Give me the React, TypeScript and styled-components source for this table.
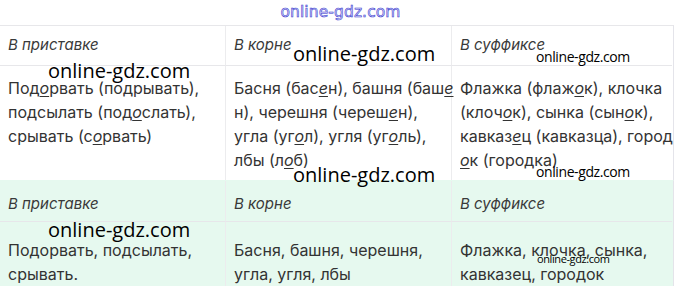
import React from 'react';
import styled, { createGlobalStyle, css } from 'styled-components';

type Part = string | { v: string };
type Line = Part[];
type Tone = 'plain' | 'green';

const GlobalStyle = createGlobalStyle`
  html, body {
    margin: 0;
    padding: 0;
    background: #ffffff;
  }
  body {
    font-family: Inter, 'Noto Sans', sans-serif;
    color: #333333;
  }
`;

const o = { v: 'о' };
const e = { v: 'е' };

const topRows: Line[][] = [
  [
    ['Под', o, 'рвать (подрывать),'],
    ['подсылать (под', o, 'слать),'],
    ['срывать (с', o, 'рвать)'],
  ],
  [
    ['Басня (бас', e, 'н), башня (баш', e],
    ['н), черешня (череш', e, 'н),'],
    ['угла (уг', o, 'л), угля (уг', o, 'ль),'],
    ['лбы (л', o, 'б)'],
  ],
  [
    ['Флажка (флаж', o, 'к), клочка'],
    ['(клоч', o, 'к), сынка (сын', o, 'к),'],
    ['кавказ', e, 'ц (кавказца), город'],
    [o, 'к (городка)'],
  ],
];

const bottomRows: Line[][] = [
  [['Подорвать, подсылать,'], ['срывать.']],
  [['Басня, башня, черешня,'], ['угла, угля, лбы']],
  [['Флажка, клочка, сынка,'], ['кавказец, городок']],
];

const headers = ['В приставке', 'В корне', 'В суффиксе'];

const marks = [
  { x: 48, y: 61, size: 20, spacing: 0 },
  { x: 293, y: 44, size: 20, spacing: 0 },
  { x: 536, y: 50, size: 14, spacing: -0.4 },
  { x: 293, y: 165, size: 20, spacing: 0 },
  { x: 536, y: 165, size: 14, spacing: -0.4 },
  { x: 48, y: 220, size: 20, spacing: 0 },
  { x: 537, y: 253, size: 11, spacing: -0.4 },
];

const renderLine = (line: Line, key: number) => (
  <TextLine key={key}>
    {line.map((part, i) =>
      typeof part === 'string' ? <React.Fragment key={i}>{part}</React.Fragment> : <Vowel key={i}>{part.v}</Vowel>,
    )}
  </TextLine>
);

const Section = ({ $tone, cells }: { $tone: Tone; cells: Line[][] }) => (
  <Table $tone={$tone}>
    {headers.map((h) => (
      <HeadCell key={h} $tone={$tone}>
        {h}
      </HeadCell>
    ))}
    {cells.map((lines, i) => (
      <BodyCell key={i} $tone={$tone}>
        {lines.map(renderLine)}
      </BodyCell>
    ))}
  </Table>
);

const App = () => (
  <Page>
    <GlobalStyle />
    <Banner>
      <BannerMark>online-gdz.com</BannerMark>
    </Banner>
    <Section $tone="plain" cells={topRows} />
    <Section $tone="green" cells={bottomRows} />
    {marks.map((m, i) => (
      <Watermark key={i} $size={m.size} $spacing={m.spacing} style={{ left: m.x, top: m.y }}>
        online-gdz.com
      </Watermark>
    ))}
  </Page>
);

const Page = styled.div`
  position: relative;
  width: 680px;
  height: 286px;
  overflow: hidden;
  background: #ffffff;
`;

const Banner = styled.div`
  display: flex;
  justify-content: center;
  align-items: center;
  height: 25px;
  padding-left: 1px;
`;

const BannerMark = styled.span`
  font-family: 'DejaVu Sans', sans-serif;
  font-size: 15.5px;
  line-height: 1;
  color: #d4d4f6;
  -webkit-text-stroke: 0.55px #3636cf;
  letter-spacing: 0.1px;
`;

const Table = styled.div<{ $tone: Tone }>`
  ${({ $tone }) => css`
    display: grid;
    grid-template-columns: 226px 226px 220px;
    width: 673px;
    background: ${$tone === 'green' ? '#e6f9ef' : '#ffffff'};
    border-top: 1px solid ${$tone === 'green' ? '#e6f9ef' : '#e7e7ea'};
    border-right: 1px solid #e4e4ea;
  `}
`;

const cellBase = css`
  padding-left: 8px;
  padding-right: 2px;
  border-right: 1px solid #ececee;
  line-height: 24px;
  white-space: nowrap;
  box-sizing: border-box;
  &:nth-child(3n) {
    border-right: none;
  }
`;

const HeadCell = styled.div<{ $tone: Tone }>`
  ${cellBase}
  height: ${({ $tone }) => ($tone === 'green' ? '41px' : '40px')};
  padding-top: ${({ $tone }) => ($tone === 'green' ? '11px' : '7px')};
  border-bottom: 1px solid #e7e7ea;
  font-size: 15px;
  font-style: italic;
  color: #3a3a3a;
`;

const BodyCell = styled.div<{ $tone: Tone }>`
  ${cellBase}
  height: ${({ $tone }) => ($tone === 'green' ? '70px' : '114px')};
  padding-top: ${({ $tone }) => ($tone === 'green' ? '16px' : '10px')};
  font-size: 16px;
  color: #333333;
`;

const TextLine = styled.div`
  height: 24px;
`;

const Vowel = styled.span`
  font-style: italic;
  text-decoration: underline;
  text-decoration-thickness: 1px;
  text-underline-offset: 2px;
`;

const Watermark = styled.div<{ $size: number; $spacing: number }>`
  position: absolute;
  font-family: 'Open Sans', sans-serif;
  font-size: ${({ $size }) => $size}px;
  letter-spacing: ${({ $spacing }) => $spacing}px;
  line-height: 1;
  color: #000000;
  white-space: nowrap;
`;

export default App;
